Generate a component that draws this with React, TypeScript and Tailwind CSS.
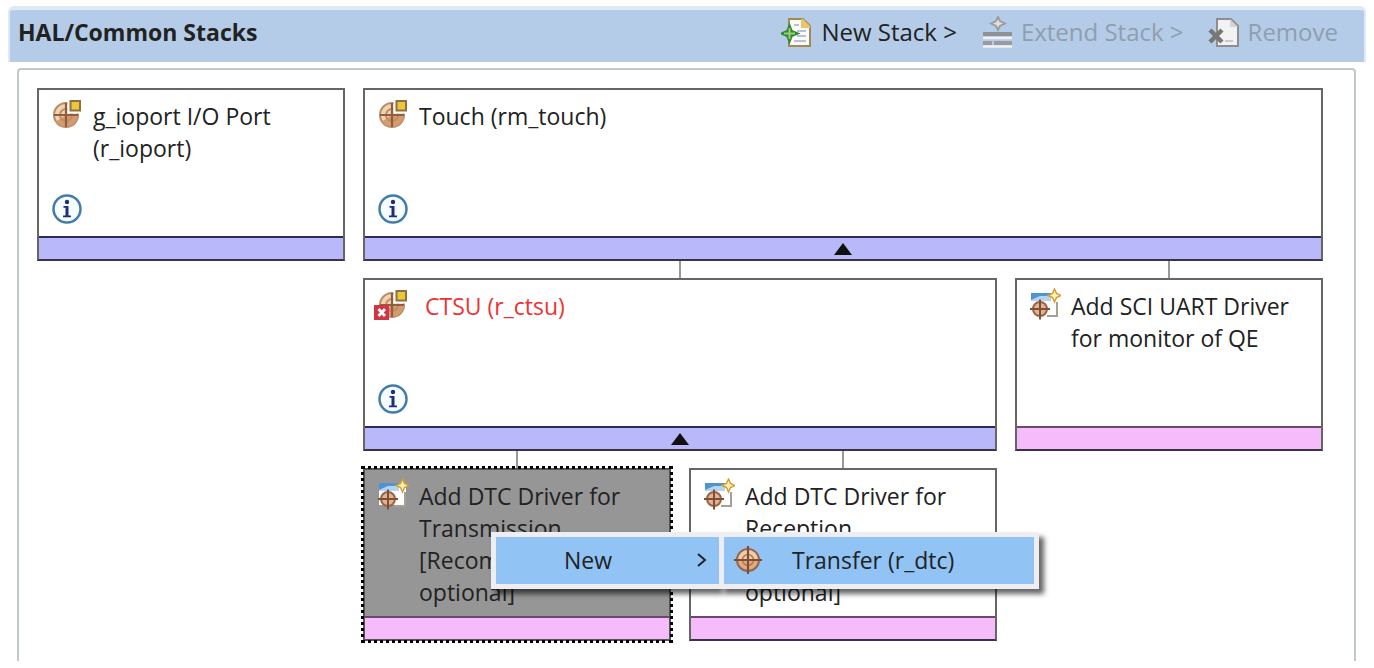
import type { ReactNode } from 'react';

function ModuleIcon({ error = false }: { error?: boolean }) {
  return (
    <svg viewBox="0 0 32 32" className="size-8 overflow-visible" aria-hidden="true">
      <circle cx="15" cy="17" r="12" fill="#efd3b2" stroke="#b78c66" strokeWidth="2" />
      <path d="M15 17h12a12 12 0 0 1-22 6.500z" fill="#d59b6e" />
      <circle cx="15" cy="17" r="6" fill="none" stroke="#c28d64" strokeWidth="2" />
      <path d="M15 5v24M3 17h24" stroke="#8f5e40" strokeWidth="2.200" />
      <rect x="16.500" y="0" width="15" height="15.500" fill="#fff" />
      <rect x="19.500" y="3" width="9.500" height="9.500" fill="#efc53a" stroke="#8f7040" strokeWidth="2" />
      {error && (
        <>
          <rect x="-3" y="17" width="15" height="15" fill="#d03546" />
          <path d="M1.500 21l6.500 7M8 21l-6.500 7" stroke="#fff" strokeWidth="2.800" />
        </>
      )}
    </svg>
  );
}

function TargetIcon() {
  return (
    <svg viewBox="0 0 32 32" className="size-8" aria-hidden="true">
      <circle cx="16" cy="16" r="11" fill="#e0ab80" stroke="#96664a" strokeWidth="2" />
      <path d="M16 6a10 10 0 0 1 10 10h-10zM16 16H6a10 10 0 0 1 10-10z" fill="#efcdab" />
      <circle cx="16" cy="16" r="5.500" fill="none" stroke="#b07a55" strokeWidth="1.500" />
      <path d="M16 2v28M2 16h28" stroke="#7d4f38" strokeWidth="2.200" />
    </svg>
  );
}

function AddModuleIcon() {
  return (
    <svg viewBox="0 0 32 32" className="size-8" aria-hidden="true">
      <rect x="2" y="5" width="27" height="22" fill="#fdfdfd" />
      <path d="M2 5h20v7H2z" fill="#4f93d4" />
      <path d="M2 12l9-4h11v5H2z" fill="#b5d4f0" />
      <path d="M28 14v14H18" fill="none" stroke="#a5a294" strokeWidth="2" />
      <circle cx="11" cy="21" r="7" fill="#e3b48e" stroke="#96664a" strokeWidth="2" />
      <path d="M11 11.500v20M1 21h20" stroke="#7d4f38" strokeWidth="2" />
      <path d="M25.500 1l2 4.500 4.500 2-4.500 2-2 4.500-2-4.500-4.500-2 4.500-2z" fill="#fff1b0" stroke="#cda03a" strokeWidth="1.500" />
    </svg>
  );
}

function InfoIcon() {
  return (
    <svg viewBox="0 0 32 32" className="size-8" aria-hidden="true">
      <circle cx="16" cy="16" r="13.500" fill="#f7fcff" stroke="#447cab" strokeWidth="2.500" />
      <circle cx="16" cy="9" r="2.200" fill="#1c2f7c" />
      <path d="M12.500 13h5v9.500h2.500v1.800h-8v-1.800h2.500v-7.700h-2z" fill="#1c2f7c" />
    </svg>
  );
}

function NewStackIcon() {
  return (
    <svg viewBox="0 0 32 32" className="size-8" aria-hidden="true">
      <path d="M8 3h14l7 7v20H8z" fill="#fbfbf6" stroke="#a08b58" strokeWidth="2" />
      <path d="M20 3h2l7 7v2h-9z" fill="#eac36a" />
      <path d="M13 9h5M16 15h9M16 20h9M13 25h12" stroke="#b3c0e2" strokeWidth="1.800" />
      <path d="M8.500 10.500l2 5 5 2-5 2-2 5-2-5-5-2 5-2z" fill="#8fd070" stroke="#38833a" strokeWidth="3" />
      <path d="M8.500 12v11M3 17.500h11" stroke="#8fd070" strokeWidth="2" />
    </svg>
  );
}

function ExtendStackIcon() {
  return (
    <svg viewBox="0 0 32 32" className="size-8" aria-hidden="true">
      <path d="M17 1l2 4 5 2.500-5 2.500-2 4-2-4-5-2.500 5-2.500z" fill="#ddd" stroke="#9b9b9b" strokeWidth="1.800" />
      <path d="M2 18h29" stroke="#8f9194" strokeWidth="4" />
      <path d="M2 22h29M2 30.500h29" stroke="#eef0f2" strokeWidth="2.500" />
      <path d="M2 27h9M13 27h18" stroke="#999b9e" strokeWidth="4" />
    </svg>
  );
}

function RemoveIcon() {
  return (
    <svg viewBox="0 0 32 32" className="size-8" aria-hidden="true">
      <path d="M9 3h14l7 7v20H9z" fill="#f2f2f2" stroke="#8e8e8e" strokeWidth="2" />
      <path d="M22 3v8h8z" fill="#d4d4d4" />
      <path d="M2 14l12 12M14 14L2 26" stroke="#777" strokeWidth="4.500" />
      <path d="M17 25h8" stroke="#bbb" strokeWidth="1.500" />
    </svg>
  );
}

interface StackCardProps {
  icon: ReactNode;
  title: string;
  status?: 'module' | 'optional';
  error?: boolean;
  info?: boolean;
  expandable?: boolean;
  selected?: boolean;
}

function StackCard({ icon, title, status = 'module', error, info, expandable, selected }: StackCardProps) {
  return (
    <div
      className={`flex h-[173px] flex-col overflow-hidden border-2 ${
        selected
          ? 'border-[#555] bg-[#969696] outline-3 -outline-offset-1 outline-dotted outline-black'
          : 'border-[#666] border-b-[#3a3348] bg-white'
      }`}
    >
      <div className="flex h-[146px] shrink-0 flex-col px-3 pt-2">
        <div className="flex gap-2.5">
          <div className="shrink-0">{icon}</div>
          <h2 className={`pt-0.5 ${error ? 'pl-1.5 text-[#ee3333]' : 'text-[#222]'}`}>{title}</h2>
        </div>
        {info && (
          <div className="mt-auto pb-[11px]">
            <InfoIcon />
          </div>
        )}
      </div>
      <div
        className={`flex grow items-center justify-center border-t-2 ${
          status === 'module' ? 'border-[#2c2c58] bg-[#b8b8fb]' : 'border-[#6a4a6a] bg-[#f5bbfa]'
        }`}
      >
        {expandable && (
          <svg viewBox="0 0 18 12" className="h-3 w-[18px]" aria-hidden="true">
            <path d="M9 0l9 12H0z" fill="#111" />
          </svg>
        )}
      </div>
    </div>
  );
}

function Connector() {
  return <div className="mx-auto h-[17px] w-0.5 bg-[#999]" />;
}

function ContextMenu() {
  return (
    <div role="menu" className="absolute top-[81px] left-32 z-10 flex whitespace-nowrap text-[#222]">
      <div className="w-[228px] border-[5px] border-r-0 border-[#eeeef2] shadow-[4px_5px_5px_rgba(0,0,0,0.6)]">
        <button type="button" role="menuitem" className="flex h-[47px] w-full items-center justify-between bg-[#91c3f4] pr-3 pb-0.5 pl-[68px]">
          New
          <svg viewBox="0 0 10 16" className="h-4 w-2.5" aria-hidden="true">
            <path d="M1 2l7 6-7 6" fill="none" stroke="#222" strokeWidth="2" />
          </svg>
        </button>
      </div>
      <div className="w-[320px] border-[5px] border-[#eeeef2] shadow-[5px_5px_5px_rgba(0,0,0,0.6)]">
        <button type="button" role="menuitem" className="flex h-[47px] w-full items-center gap-7 bg-[#91c3f4] pb-0.5 pl-2">
          <TargetIcon />
          Transfer (r_dtc)
        </button>
      </div>
    </div>
  );
}

export default function App() {
  return (
    <main className="min-h-[668px] bg-white px-2 pt-1.5 font-['Open_Sans',sans-serif] text-[23px] leading-8 text-[#222]">
      <header className="flex h-14 items-center justify-between rounded-t-md border-t-4 border-r-2 border-l-2 border-[#dfe9f5] bg-[#b4cce7] pr-[26px] pb-2 pl-2">
        <h1 className="font-bold">HAL/Common Stacks</h1>
        <div className="flex items-center gap-6 text-2xl">
          <button type="button" className="flex items-center gap-2">
            <NewStackIcon />
            New Stack &gt;
          </button>
          <button type="button" disabled className="flex items-center gap-2 text-[#8f9eb0]">
            <ExtendStackIcon />
            Extend Stack &gt;
          </button>
          <button type="button" disabled className="flex items-center gap-2 text-[#8f9eb0]">
            <RemoveIcon />
            Remove
          </button>
        </div>
      </header>

      <section className="mt-1.5 mr-2.5 ml-[9px] h-[593px] rounded-t-sm border-2 border-b-0 border-[#c0c8c8] pt-[18px] pr-[31px] pl-[18px]">
        <div className="grid grid-cols-4 gap-x-[18px]">
          <StackCard icon={<ModuleIcon />} title="g_ioport I/O Port (r_ioport)" info />
          <div className="col-span-3">
            <StackCard icon={<ModuleIcon />} title="Touch (rm_touch)" info expandable />
          </div>

          <div className="col-span-2 col-start-2">
            <Connector />
            <StackCard icon={<ModuleIcon error />} title="CTSU (r_ctsu)" error info expandable />
          </div>
          <div>
            <Connector />
            <StackCard icon={<AddModuleIcon />} title="Add SCI UART Driver for monitor of QE" status="optional" />
          </div>

          <div className="relative col-start-2">
            <Connector />
            <StackCard
              icon={<AddModuleIcon />}
              title="Add DTC Driver for Transmission [Recommended but optional]"
              status="optional"
              selected
            />
            <ContextMenu />
          </div>
          <div>
            <Connector />
            <StackCard
              icon={<AddModuleIcon />}
              title="Add DTC Driver for Reception [Recommended but optional]"
              status="optional"
            />
          </div>
        </div>
      </section>
    </main>
  );
}
